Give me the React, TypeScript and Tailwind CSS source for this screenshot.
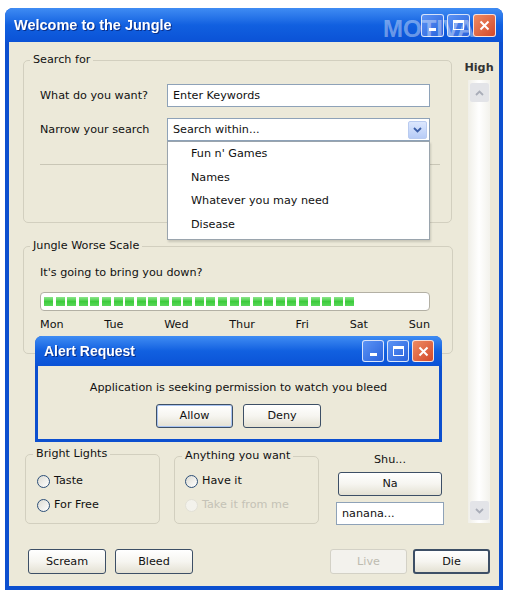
import { useState } from "react";

const btn =
	"flex items-center justify-center rounded-[3px] border border-[#3d4f66] bg-linear-to-b from-white via-[#f6f5f0] to-[#e4e1d3] text-[#111]";

const Chevron = ({ up, color }: { up?: boolean; color: string }) => (
	<svg width="9" height="6" viewBox="0 0 9 6">
		<polyline
			points={up ? "1,5 4.5,1.5 8,5" : "1,1 4.5,4.5 8,1"}
			fill="none"
			stroke={color}
			strokeWidth="1.8"
		/>
	</svg>
);

const TitleButtons = ({ size }: { size: "lg" | "sm" }) => {
	const box =
		size === "lg"
			? "w-[23px] h-[23px] rounded-[3px]"
			: "w-[22px] h-[22px] rounded-[3px]";
	return (
		<div className="flex gap-[3px]">
			<div
				className={`${box} flex items-end justify-center pb-[5px] border border-white/80 bg-linear-to-br from-[#5b93f5] to-[#2a62db]`}
			>
				<div className="w-[7px] h-[3px] bg-white" />
			</div>
			<div
				className={`${box} flex items-center justify-center border border-white/80 bg-linear-to-br from-[#5b93f5] to-[#2a62db]`}
			>
				<div className="w-[11px] h-[10px] border border-white border-t-[3px]" />
			</div>
			<div
				className={`${box} flex items-center justify-center border border-white/80 bg-linear-to-br from-[#ee8a62] to-[#d2482a]`}
			>
				<svg width="11" height="11" viewBox="0 0 11 11">
					<path d="M1.5 1.5 L9.5 9.5 M9.5 1.5 L1.5 9.5" stroke="white" strokeWidth="2" />
				</svg>
			</div>
		</div>
	);
};

const Radio = ({ label, disabled }: { label: string; disabled?: boolean }) => (
	<div className="flex items-center h-[16px] gap-[4px]">
		<div
			className={
				disabled
					? "w-[13px] h-[13px] rounded-full border border-[#e2e0d6] bg-[#f3f2ec]"
					: "w-[13px] h-[13px] rounded-full border border-[#2c4f78] bg-linear-to-br from-[#dcdbd3] to-white"
			}
		/>
		<span className={disabled ? "text-[#c4c2b6]" : "text-[#111]"}>{label}</span>
	</div>
);

const progress = Array.from({ length: 27 });
const days = ["Mon", "Tue", "Wed", "Thur", "Fri", "Sat", "Sun"];
const options = ["Fun n' Games", "Names", "Whatever you may need", "Disease"];

const App = () => {
	const [open] = useState(true);

	return (
		<div className="w-[513px] h-[600px] bg-white pt-[8px] pl-[5px] font-['DejaVu_Sans',sans-serif] text-[11.2px] leading-[14px] text-[#111]">
			<div className="w-[498px] h-[582px] flex flex-col rounded-t-[8px] bg-[#0c4fcf] px-[4px] pb-[4px]">
				{/* title bar */}
				<div className="relative h-[34px] -mx-[4px] flex items-center justify-between pl-[9px] pr-[7px] rounded-t-[8px] bg-linear-to-b from-[#3f8cf3] via-[#1160e0] to-[#0b52d6]">
					<span className="text-white font-['Liberation_Sans',sans-serif] font-bold text-[14.5px] drop-shadow-[1px_1px_0_#0a2f8a]">
						Welcome to the Jungle
					</span>
					<TitleButtons size="lg" />
					<span className="absolute left-[378px] top-[8px] font-['Liberation_Sans',sans-serif] text-[24px] leading-[26px] font-bold text-white/40 pointer-events-none">
						MOTIVA
					</span>
				</div>

				{/* body */}
				<div className="flex-1 flex flex-col bg-[#ece9d9]">
					<div className="flex pl-[14px]">
						{/* left column */}
						<div className="w-[429px] flex flex-col">
							<fieldset className="mt-[11px] h-[170px] rounded-[5px] border border-[#d2cfbf] pl-[16px]">
								<legend className="-ml-[10px] px-[3px]">Search for</legend>
								<div className="mt-[17px] flex items-center h-[23px]">
									<span className="w-[127px]">What do you want?</span>
									<div className="w-[263px] h-[23px] flex items-center px-[5px] border border-[#8ea2b8] bg-white">
										Enter Keywords
									</div>
								</div>
								<div className="mt-[11px] flex items-center h-[23px]">
									<span className="w-[127px]">Narrow your search</span>
									<div className="relative w-[263px] h-[23px] flex items-center justify-between pl-[5px] pr-[2px] border border-[#8ea2b8] bg-white">
										<span>Search within...</span>
										<div className="w-[19px] h-[18px] flex items-center justify-center rounded-[2px] border border-[#b9cbf0] bg-linear-to-b from-[#dce7fd] to-[#b7ccf7]">
											<Chevron color="#3c5fa8" />
										</div>
										{open && (
											<div className="absolute left-[-1px] top-[22px] z-20 w-[263px] h-[99px] flex flex-col pt-[5px] pl-[23px] gap-[9.5px] border border-[#9aa4ad] bg-white shadow-[1px_2px_2px_rgba(0,0,0,0.15)]">
												{options.map((o) => (
													<span key={o}>{o}</span>
												))}
											</div>
										)}
									</div>
								</div>
								<div className="mt-[23px] w-[400px] h-[2px] border-t border-[#c9c6b6] border-b-white" />
							</fieldset>

							<fieldset className="mt-[16px] h-[115px] rounded-[5px] border border-[#d2cfbf] pl-[16px] pr-[22px]">
								<legend className="-ml-[10px] px-[3px]">Jungle Worse Scale</legend>
								<div className="mt-[13px]">It's going to bring you down?</div>
								<div className="mt-[12px] w-[390px] h-[19px] flex items-center gap-[2.6px] pl-[3px] rounded-[4px] border border-[#b3b0a4] bg-white">
									{progress.map((_, i) => (
										<div
											key={i}
											className="w-[9px] h-[9px] bg-linear-to-b from-[#8ae68a] via-[#3ccb3c] to-[#5ad85a]"
										/>
									))}
								</div>
								<div className="mt-[7px] w-[390px] flex justify-between">
									{days.map((d) => (
										<span key={d}>{d}</span>
									))}
								</div>
							</fieldset>

							{/* alert dialog */}
							<div className="relative z-10 -mt-[18px] ml-[12px] w-[407px] h-[106px] flex flex-col rounded-t-[7px] bg-[#0c4fcf] px-[3px] pb-[3px]">
								<div className="h-[30px] -mx-[3px] flex items-center justify-between pl-[9px] pr-[8px] rounded-t-[7px] bg-linear-to-b from-[#3f8cf3] via-[#1160e0] to-[#0b52d6]">
									<span className="text-white font-['Liberation_Sans',sans-serif] font-bold text-[14px] drop-shadow-[1px_1px_0_#0a2f8a]">
										Alert Request
									</span>
									<TitleButtons size="sm" />
								</div>
								<div className="flex-1 flex flex-col items-center bg-[#ece9d9]">
									<div className="mt-[15px]">Application is seeking permission to watch you bleed</div>
									<div className="mt-[9px] flex gap-[10px]">
										<div className={`${btn} w-[77px] h-[24px] border-[#2a5db5] shadow-[inset_0_0_0_1px_#a9c4f2]`}>
											Allow
										</div>
										<div className={`${btn} w-[78px] h-[24px]`}>Deny</div>
									</div>
								</div>
							</div>

							{/* lower controls */}
							<div className="mt-[5px] flex items-start">
								<fieldset className="ml-[2px] w-[135px] h-[77px] rounded-[5px] border border-[#d2cfbf] pl-[11px]">
									<legend className="-ml-[4px] px-[3px]">Bright Lights</legend>
									<div className="mt-[12px] flex flex-col gap-[8px]">
										<Radio label="Taste" />
										<Radio label="For Free" />
									</div>
								</fieldset>
								<fieldset className="mt-[2px] ml-[14px] w-[145px] h-[75px] rounded-[5px] border border-[#d2cfbf] pl-[10px]">
									<legend className="-ml-[3px] px-[3px]">Anything you want</legend>
									<div className="mt-[10px] flex flex-col gap-[8px]">
										<Radio label="Have it" />
										<Radio label="Take it from me" disabled />
									</div>
								</fieldset>
								<div className="ml-[17px] w-[108px] flex flex-col items-center mt-[6px]">
									<span>Shu...</span>
									<div className={`${btn} mt-[5px] w-[104px] h-[24px]`}>Na</div>
									<div className="mt-[6px] w-[108px] h-[23px] flex items-center px-[5px] border border-[#8ea2b8] bg-white">
										nanana...
									</div>
								</div>
							</div>
						</div>

						{/* right scroll column */}
						<div className="ml-[13px] w-[28px] flex flex-col items-center">
							<span className="mt-[19px] font-bold text-[#333]">High</span>
							<div className="mt-[5px] w-[22px] h-[443px] flex flex-col justify-between items-center py-[3px] bg-linear-to-r from-[#f0efe8] via-white to-[#f3f2ec]">
								<div className="w-[19px] h-[19px] flex items-center justify-center rounded-[2px] bg-[#e3e4e8]">
									<Chevron up color="#a9adb8" />
								</div>
								<div className="w-[19px] h-[19px] flex items-center justify-center rounded-[2px] bg-[#e3e4e8]">
									<Chevron color="#a9adb8" />
								</div>
							</div>
						</div>
					</div>

					{/* bottom buttons */}
					<div className="mt-[24px] flex items-center pl-[19px] pr-[9px]">
						<div className={`${btn} w-[78px] h-[25px]`}>Scream</div>
						<div className={`${btn} ml-[9px] w-[78px] h-[25px]`}>Bleed</div>
						<div className="ml-auto w-[77px] h-[25px] flex items-center justify-center rounded-[3px] border border-[#d3d1c6] bg-[#f3f2ed] text-[#bdbbb0]">
							Live
						</div>
						<div className={`${btn} ml-[6px] w-[77px] h-[25px] border-2 border-[#2d5aa6]`}>Die</div>
					</div>
				</div>
			</div>
		</div>
	);
};

export default App;
